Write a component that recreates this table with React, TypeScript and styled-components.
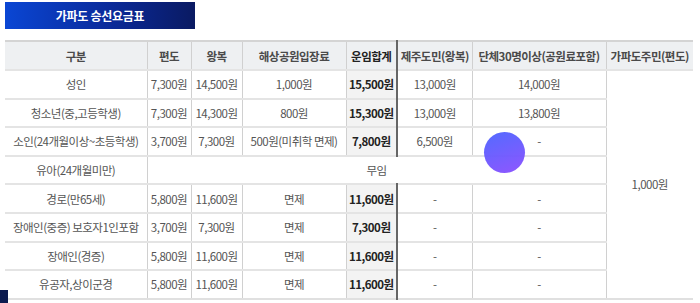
import React from "react";
import styled, { createGlobalStyle } from "styled-components";

const GlobalStyle = createGlobalStyle`
  html, body {
    margin: 0;
    padding: 0;
    background: #fff;
    font-family: "Noto Sans CJK KR", "Noto Sans", sans-serif;
  }
`;

interface FareRow {
  label: string;
  oneWay: string;
  round: string;
  park: string;
  total: string;
  jeju: string;
  group: string;
}

const rows: FareRow[] = [
  { label: "성인", oneWay: "7,300원", round: "14,500원", park: "1,000원", total: "15,500원", jeju: "13,000원", group: "14,000원" },
  { label: "청소년(중,고등학생)", oneWay: "7,300원", round: "14,300원", park: "800원", total: "15,300원", jeju: "13,000원", group: "13,800원" },
  { label: "소인(24개월이상~초등학생)", oneWay: "3,700원", round: "7,300원", park: "500원(미취학 면제)", total: "7,800원", jeju: "6,500원", group: "-" },
  { label: "유아(24개월미만)", oneWay: "", round: "", park: "", total: "", jeju: "", group: "" },
  { label: "경로(만65세)", oneWay: "5,800원", round: "11,600원", park: "면제", total: "11,600원", jeju: "-", group: "-" },
  { label: "장애인(중증) 보호자1인포함", oneWay: "3,700원", round: "7,300원", park: "면제", total: "7,300원", jeju: "-", group: "-" },
  { label: "장애인(경증)", oneWay: "5,800원", round: "11,600원", park: "면제", total: "11,600원", jeju: "-", group: "-" },
  { label: "유공자,상이군경", oneWay: "5,800원", round: "11,600원", park: "면제", total: "11,600원", jeju: "-", group: "-" },
];

const Page = styled.div`
  position: relative;
  width: 700px;
  height: 303px;
  overflow: hidden;
  padding: 2px 7px 0 5px;
  box-sizing: border-box;
`;

const TitleBar = styled.div`
  width: 190px;
  height: 27px;
  display: flex;
  align-items: center;
  justify-content: center;
  background: linear-gradient(90deg, #0a46d4 0%, #0a2a9a 55%, #0a1a62 100%);
  color: #fff;
  font-size: 12px;
  font-weight: 700;
  letter-spacing: -0.3px;
  margin-bottom: 11px;
`;

const Table = styled.table`
  width: 688px;
  border-collapse: collapse;
  table-layout: fixed;
  border-top: 2px solid #d4d4d4;
  border-bottom: 2px solid #e0e0e0;
  font-size: 11.5px;
  color: #555;
  letter-spacing: -0.5px;
`;

const Th = styled.th<{ $total?: boolean }>`
  height: 27px;
  padding: 0;
  background: #eef0f2;
  font-weight: 700;
  color: ${(p) => (p.$total ? "#222" : "#4a4a4a")};
  border-left: 1px solid #d0d0d0;
  border-right: ${(p) => (p.$total ? "2px solid #666" : "1px solid #d0d0d0")};
  white-space: nowrap;
  &:first-child {
    border-left: none;
  }
  &:last-child {
    border-right: none;
  }
`;

const Td = styled.td<{ $total?: boolean }>`
  height: 26.6px;
  padding: 0;
  text-align: center;
  white-space: nowrap;
  border-top: 2px solid #e4e4e4;
  border-left: 1px solid #d0d0d0;
  border-right: ${(p) => (p.$total ? "2px solid #666" : "1px solid #d0d0d0")};
  background: ${(p) => (p.$total ? "#f3f3f3" : "#fff")};
  color: ${(p) => (p.$total ? "#222" : "#555")};
  font-weight: ${(p) => (p.$total ? 700 : 400)};
  &:first-child {
    border-left: none;
  }
  &:last-child {
    border-right: none;
  }
`;

const FloatingDot = styled.div`
  position: absolute;
  left: 484px;
  top: 132px;
  width: 41px;
  height: 41px;
  border-radius: 50%;
  background: linear-gradient(160deg, #4a63ff 0%, #8a4dff 100%);
  opacity: 0.95;
`;

const CornerTab = styled.div`
  position: absolute;
  left: 0;
  bottom: 0;
  width: 8px;
  height: 13px;
  background: #0b1a4f;
`;

export default function App() {
  return (
    <>
      <GlobalStyle />
      <Page>
        <TitleBar>가파도 승선요금표</TitleBar>
        <Table>
          <colgroup>
            <col style={{ width: 142 }} />
            <col style={{ width: 44 }} />
            <col style={{ width: 51 }} />
            <col style={{ width: 104 }} />
            <col style={{ width: 51 }} />
            <col style={{ width: 75 }} />
            <col style={{ width: 134 }} />
            <col style={{ width: 87 }} />
          </colgroup>
          <thead>
            <tr>
              <Th>구분</Th>
              <Th>편도</Th>
              <Th>왕복</Th>
              <Th>해상공원입장료</Th>
              <Th $total>운임합계</Th>
              <Th>제주도민(왕복)</Th>
              <Th>단체30명이상(공원료포함)</Th>
              <Th>가파도주민(편도)</Th>
            </tr>
          </thead>
          <tbody>
            {rows.map((r, i) =>
              r.oneWay === "" ? (
                <tr key={r.label}>
                  <Td>{r.label}</Td>
                  <Td colSpan={6}>무임</Td>
                </tr>
              ) : (
                <tr key={r.label}>
                  <Td>{r.label}</Td>
                  <Td>{r.oneWay}</Td>
                  <Td>{r.round}</Td>
                  <Td>{r.park}</Td>
                  <Td $total>{r.total}</Td>
                  <Td>{r.jeju}</Td>
                  <Td>{r.group}</Td>
                  {i === 0 && <Td rowSpan={8}>1,000원</Td>}
                </tr>
              )
            )}
          </tbody>
        </Table>
        <FloatingDot />
        <CornerTab />
      </Page>
    </>
  );
}
